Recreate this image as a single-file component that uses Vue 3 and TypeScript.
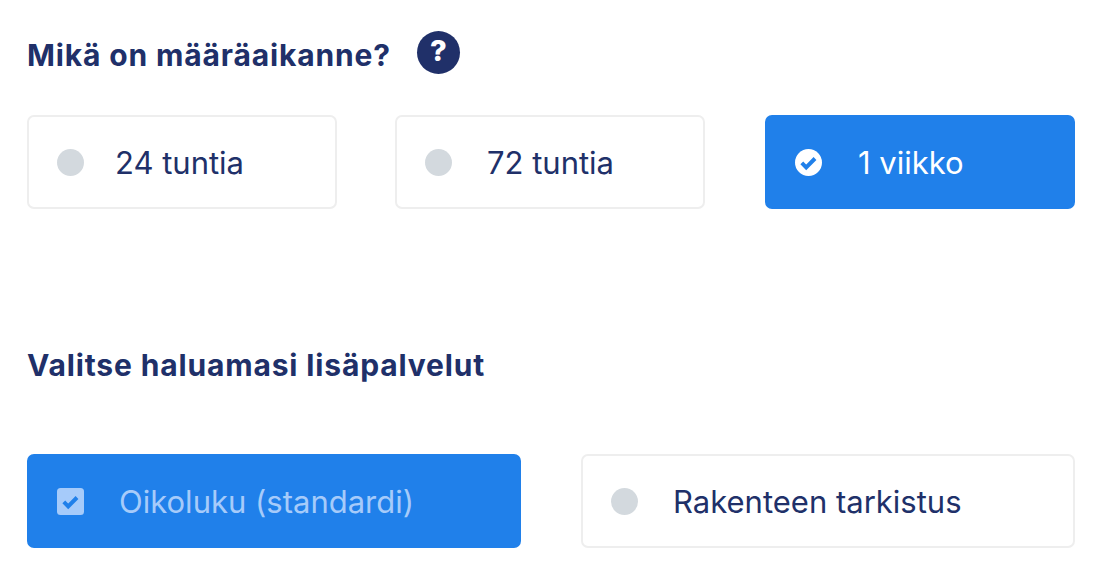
<script setup lang="ts">
interface Option { label: string; state: 'off' | 'on' | 'check' }
const periods: Option[] = [
  { label: '24 tuntia', state: 'off' },
  { label: '72 tuntia', state: 'off' },
  { label: '1 viikko', state: 'on' },
]
const extras: Option[] = [
  { label: 'Oikoluku (standardi)', state: 'check' },
  { label: 'Rakenteen tarkistus', state: 'off' },
]
</script>

<template>
  <main class="page">
    <section class="period">
      <div class="title-row">
        <h2 class="title first">Mikä on määräaikanne?</h2>
        <span class="help">?</span>
      </div>
      <div class="options three">
        <div v-for="o in periods" :key="o.label" class="option" :class="{ active: o.state === 'on' }">
          <svg v-if="o.state === 'on'" class="mark" viewBox="0 0 27 27">
            <circle cx="13.5" cy="13.5" r="13.5" fill="#fff" />
            <path d="M6.8 13.9l4.4 4.4 8.8-8.8" fill="none" stroke="#2080ea" stroke-width="4" />
          </svg>
          <span v-else class="dot"></span>
          <span class="label">{{ o.label }}</span>
        </div>
      </div>
    </section>
    <section class="extras">
      <h2 class="title">Valitse haluamasi lisäpalvelut</h2>
      <div class="options two">
        <div v-for="o in extras" :key="o.label" class="option" :class="{ active: o.state === 'check', muted: o.state === 'check' }">
          <svg v-if="o.state === 'check'" class="mark" viewBox="0 0 27 27">
            <rect width="27" height="27" rx="3.5" fill="#a6cbfa" />
            <path d="M6.8 13.9l4.4 4.4 8.8-8.8" fill="none" stroke="#2080ea" stroke-width="4" />
          </svg>
          <span v-else class="dot"></span>
          <span class="label">{{ o.label }}</span>
        </div>
      </div>
    </section>
  </main>
</template>

<style>
html, body { margin: 0; background: #fff; }
</style>

<style scoped>
.page {
  width: 1100px;
  height: 581px;
  box-sizing: border-box;
  padding: 31px 25px 0 27px;
  font-family: Inter, "Liberation Sans", sans-serif;
  color: #203069;
  overflow: hidden;
}
.title-row {
  display: flex;
  align-items: center;
  gap: 26px;
  height: 43px;
}
.title {
  margin: 0;
  font-family: Inter, "Noto Sans", sans-serif;
  font-size: 30px;
  line-height: 36px;
  font-weight: 700;
  letter-spacing: 0.85px;
  color: #203069;
}
.first { margin-top: 5px; }
.help {
  width: 43px;
  height: 43px;
  border-radius: 50%;
  background: #203069;
  color: #fff;
  display: flex;
  align-items: center;
  justify-content: center;
  font-size: 29px;
  font-weight: 800;
  padding-bottom: 5px;
  box-sizing: border-box;
}
.options { display: flex; }
.three {
  margin-top: 41px;
  gap: 58px;
}
.three .option { width: 310px; }
.three .option:nth-child(3) { margin-left: 2px; gap: 36px; }
.three .option:nth-child(1) { gap: 31px; }
.two {
  margin-top: 71px;
  gap: 60px;
}
.two .option { width: 494px; }
.extras { margin-top: 138px; }
.option {
  height: 94px;
  box-sizing: border-box;
  border: 2px solid #eeeeee;
  border-radius: 7px;
  background: #fff;
  display: flex;
  align-items: center;
  padding-left: 28px;
  gap: 35px;
  font-size: 31px;
  color: #203069;
}
.active {
  background: #2080ea;
  border-color: #2080ea;
  color: #fff;
}
.muted { color: #a6cbfa; }
.dot {
  width: 27px;
  height: 27px;
  border-radius: 50%;
  background: #d3d9de;
  flex: none;
}
.mark { width: 27px; height: 27px; flex: none; display: block; }
</style>
